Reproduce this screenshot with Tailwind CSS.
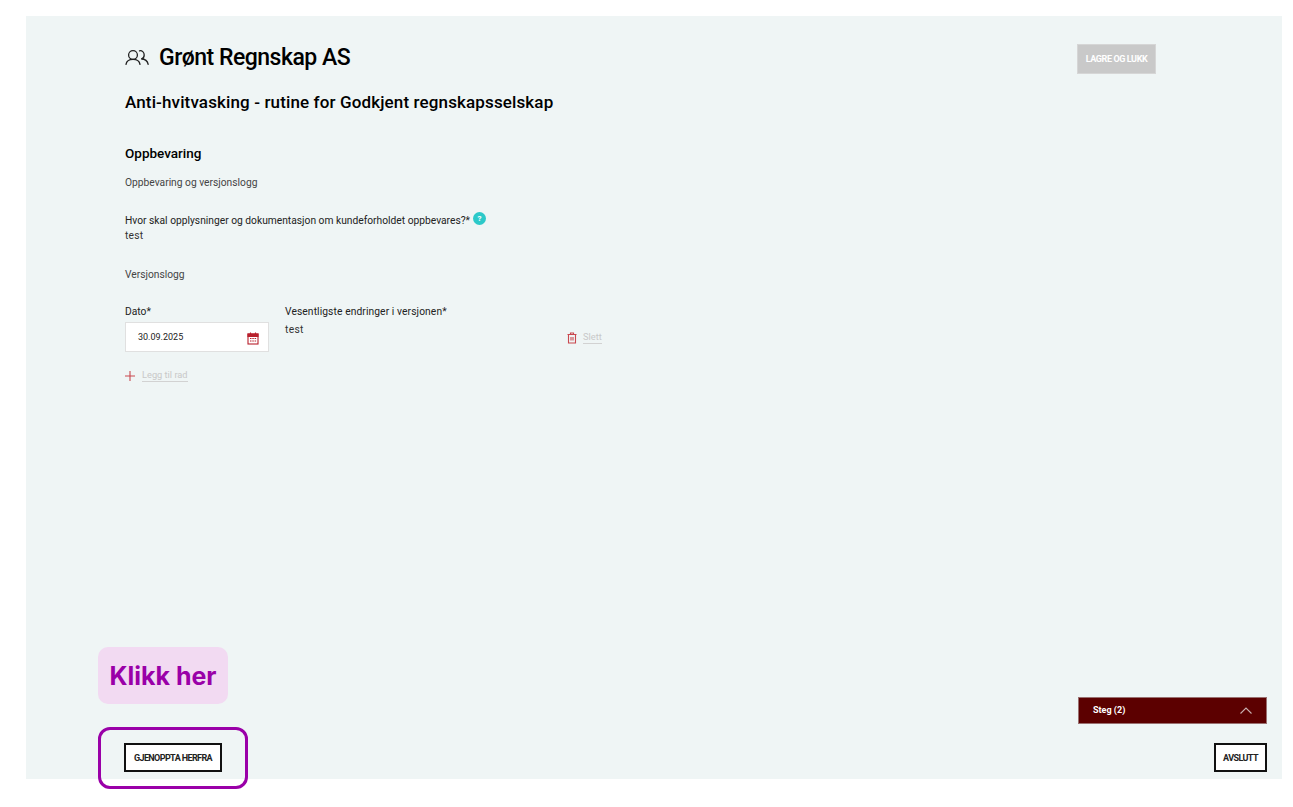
<!DOCTYPE html>
<html lang="en">
<head>
    <meta charset="UTF-8">
    <meta name="viewport" content="width=device-width, initial-scale=1.0">
    <title>Grønt Regnskap AS</title>
    <script src="https://cdn.jsdelivr.net/npm/@tailwindcss/browser@4"></script>
</head>
<body class="bg-white text-[#1a1a1a] font-['Roboto',sans-serif]">
<div class="relative h-[807px] overflow-hidden pt-4 pl-[26px] pr-[11px]">

    <main class="h-[763px] bg-[#eff5f5] flex flex-col justify-between pl-[99px] pr-[15px] pb-[7px]">
        <div>
            <!-- Header -->
            <div class="flex justify-between pt-7 pr-[111px]">
                <div class="flex items-center gap-[10px] h-[26px]">
                    <svg class="w-6 h-4" viewBox="0 0 24 16" fill="none" stroke="#222" stroke-width="1.300" stroke-linecap="round">
                        <circle cx="8" cy="6" r="4.400"/>
                        <path d="M1 15.300c.5-3 2.800-5 7-5s6.500 2 7 5"/>
                        <path d="M14.500 1.800c2.500-.5 4.700 1.300 4.700 4.200 0 2-1.200 3.500-2.900 4 3.300 0 6.200 2 6.900 5.300"/>
                    </svg>
                    <h1 class="mt-[2px] text-[23px] leading-[26px] font-medium tracking-[-0.5px] text-black">Grønt Regnskap AS</h1>
                </div>
                <button class="w-[79px] h-[30px] pt-[2px] bg-[#c9c9c9] border border-[#d6d6d6] text-white text-[9px] tracking-[-0.4px] font-bold">LAGRE OG LUKK</button>
            </div>

            <h2 class="mt-[16px] text-[17px] leading-6 font-medium tracking-[0.13px] text-black">Anti-hvitvasking - rutine for Godkjent regnskapsselskap</h2>
            <h3 class="mt-[29px] text-[13.500px] leading-5 font-medium text-black">Oppbevaring</h3>
            <p class="mt-[12px] text-[10.250px] leading-4 text-[#444]">Oppbevaring og versjonslogg</p>

            <div class="mt-[22px] flex items-start gap-[3px]">
                <label class="text-[10.250px] leading-4 text-[#222]">Hvor skal opplysninger og dokumentasjon om kundeforholdet oppbevares?*</label>
                <span class="w-[13px] h-[13px] -mt-px rounded-full bg-[#2cc9c9] text-white text-[8px] font-bold leading-[13px] text-center">?</span>
            </div>
            <p class="-mt-px text-[10.250px] leading-4 tracking-[0.2px] text-[#333]">test</p>

            <p class="mt-[23px] text-[10.250px] leading-4 text-[#444]">Versjonslogg</p>

            <!-- Row -->
            <div class="mt-[21px] flex">
                <div class="w-[160px]">
                    <label class="block text-[10.250px] leading-4 text-[#222]">Dato*</label>
                    <div class="mt-[2px] w-[144px] h-[30px] bg-white border border-[#e0e0e0] flex items-center justify-between pl-3 pr-[9px]">
                        <span class="pt-px text-[9px] text-[#222]">30.09.2025</span>
                        <svg class="w-3 h-[13px] mt-[2px]" viewBox="0 0 12 13" fill="none" stroke="#b8202c" stroke-width="1.100">
                            <rect x="1" y="2" width="10" height="10"/>
                            <path d="M1 2h10v2.500H1z" fill="#b8202c"/>
                            <path d="M3.500 .5v2M8.500 .5v2M3 6.500h1.500M5.300 6.500h1.500M7.600 6.500h1.500M3 9h1.500M5.300 9h1.500M7.600 9h1.500"/>
                        </svg>
                    </div>
                </div>
                <div class="w-[282px]">
                    <label class="block text-[10.250px] leading-4 tracking-[0.1px] text-[#222]">Vesentligste endringer i versjonen*</label>
                    <p class="mt-[2px] text-[10.250px] leading-4 tracking-[0.3px] text-[#333]">test</p>
                </div>
                <div class="flex items-center gap-[6px] mt-[26px] h-[15px]">
                    <svg class="w-[10px] h-[12px]" viewBox="0 0 10 12" fill="none" stroke="#c9484f" stroke-width="1.100">
                        <path d="M.5 2.500h9M3.500 2.500V1h3v1.500M1.500 2.500V11h7V2.500M4 5v3.500M6 5v3.500"/>
                    </svg>
                    <a class="text-[9.250px] leading-[12px] text-[#c8c8c8] border-b border-[#d2d2d2]">Slett</a>
                </div>
            </div>

            <div class="mt-[17px] flex items-center gap-[7px]">
                <svg class="w-[10px] h-[10px]" viewBox="0 0 10 10" stroke="#c9484f" stroke-width="1.100"><path d="M5 0v10M0 5h10"/></svg>
                <a class="text-[9.250px] leading-[12px] text-[#c8c8c8] border-b border-[#d2d2d2]">Legg til rad</a>
            </div>
        </div>

        <!-- Bottom -->
        <div class="flex flex-col items-end">
            <div class="w-[189px] h-[27px] bg-[#5c0000] border border-[#9a7070] flex items-center justify-between pl-[14px] pr-[14px]">
                <span class="text-[9px] font-bold text-white">Steg (2)</span>
                <svg class="w-3 h-[7px]" viewBox="0 0 12 7" fill="none" stroke="#c8b0b0" stroke-width="1.100"><path d="M.5 6.500 6 1l5.500 5.500"/></svg>
            </div>
            <div class="mt-[19px] w-full flex justify-between">
                <button class="-ml-px w-[98px] h-[29px] pt-[2px] bg-white border-2 border-[#111] text-[9px] tracking-[-0.6px] font-bold text-[#222]">GJENOPPTA HERFRA</button>
                <button class="w-[53px] h-[29px] pt-[2px] bg-white border-2 border-[#111] text-[9px] tracking-[-0.6px] font-bold text-[#222]">AVSLUTT</button>
            </div>
        </div>
    </main>

    <!-- Annotation -->
    <div class="absolute left-[98px] top-[647px] w-[130px] h-[57px] pt-[2px] rounded-[10px] bg-[#f2daf2] flex items-center justify-center text-[25px] font-bold text-[#9a00a8] font-['Inter',sans-serif]">Klikk her</div>
    <div class="absolute left-[98px] top-[727px] w-[150px] h-[62px] rounded-[12px] border-[3px] border-[#9a00a8]"></div>
</div>
</body>
</html>
